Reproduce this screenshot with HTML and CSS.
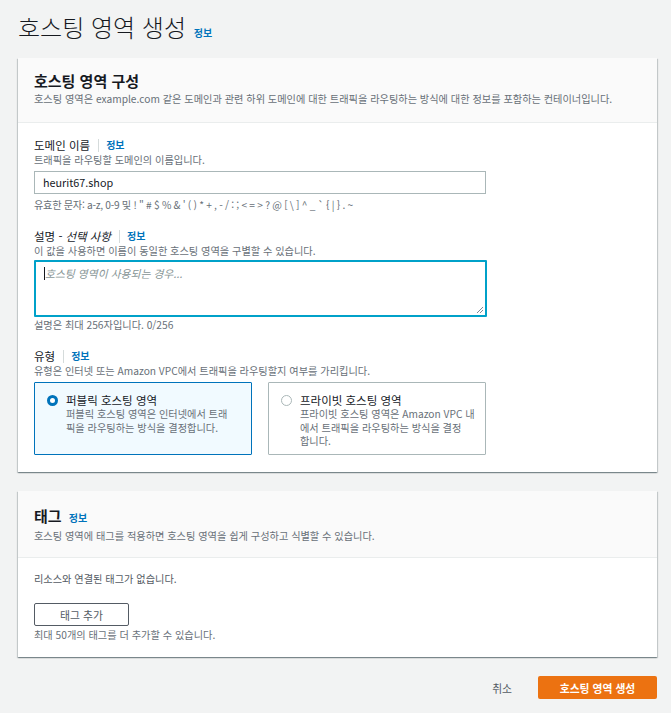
FILE: index.html
```html
<!DOCTYPE html>
<html lang="ko">
<head>
<meta charset="utf-8">
<title>호스팅 영역 생성</title>
<link rel="stylesheet" href="styles.css">
</head>
<body>
<div class="page">
  <h1 class="page-title">호스팅 영역 생성 <a class="info">정보</a></h1>

  <section class="panel">
    <header class="panel-head">
      <h2 class="panel-title">호스팅 영역 구성</h2>
      <p class="panel-desc">호스팅 영역은 example.com 같은 도메인과 관련 하위 도메인에 대한 트래픽을 라우팅하는 방식에 대한 정보를 포함하는 컨테이너입니다.</p>
    </header>
    <div class="panel-body">
      <div class="field">
        <div class="label">도메인 이름<span class="sep"></span><a class="info">정보</a></div>
        <div class="desc">트래픽을 라우팅할 도메인의 이름입니다.</div>
        <div class="input">heurit67.shop</div>
        <div class="hint chars">유효한 문자: a-z, 0-9 및 ! " # $ % &amp; ' ( ) * + , - / : ; &lt; = &gt; ? @ [ \ ] ^ _ ` { | } . ~</div>
      </div>

      <div class="field">
        <div class="label">설명 - <i>선택 사항</i><span class="sep"></span><a class="info">정보</a></div>
        <div class="desc">이 값을 사용하면 이름이 동일한 호스팅 영역을 구별할 수 있습니다.</div>
        <div class="textarea"><span class="caret"></span><span class="placeholder">호스팅 영역이 사용되는 경우...</span>
          <svg class="grip" width="8" height="8" viewBox="0 0 8 8"><path d="M7 1L1 7M7 4L4 7" stroke="#7d8998" stroke-width="1"/></svg>
        </div>
        <div class="hint tight">설명은 최대 256자입니다. 0/256</div>
      </div>

      <div class="field">
        <div class="label">유형<span class="sep"></span><a class="info">정보</a></div>
        <div class="desc">유형은 인터넷 또는 Amazon VPC에서 트래픽을 라우팅할지 여부를 가리킵니다.</div>
        <div class="cards">
          <div class="card selected">
            <span class="radio on"></span>
            <div class="card-text">
              <div class="card-title">퍼블릭 호스팅 영역</div>
              <div class="card-desc">퍼블릭 호스팅 영역은 인터넷에서 트래<br>픽을 라우팅하는 방식을 결정합니다.</div>
            </div>
          </div>
          <div class="card">
            <span class="radio"></span>
            <div class="card-text">
              <div class="card-title">프라이빗 호스팅 영역</div>
              <div class="card-desc">프라이빗 호스팅 영역은 Amazon VPC 내<br>에서 트래픽을 라우팅하는 방식을 결정<br>합니다.</div>
            </div>
          </div>
        </div>
      </div>
    </div>
  </section>

  <section class="panel">
    <header class="panel-head tags-head">
      <h2 class="panel-title">태그 <a class="info">정보</a></h2>
      <p class="panel-desc">호스팅 영역에 태그를 적용하면 호스팅 영역을 쉽게 구성하고 식별할 수 있습니다.</p>
    </header>
    <div class="panel-body tags-body">
      <div class="empty">리소스와 연결된 태그가 없습니다.</div>
      <button class="btn">태그 추가</button>
      <div class="hint">최대 50개의 태그를 더 추가할 수 있습니다.</div>
    </div>
  </section>

  <div class="footer">
    <button class="btn-link">취소</button>
    <button class="btn-primary">호스팅 영역 생성</button>
  </div>
</div>
</body>
</html>
```

FILE: styles.css
```css
html, body {
  margin: 0;
  padding: 0;
  background: #f2f3f3;
}
body {
  font-family: "Noto Sans CJK KR", "Noto Sans", sans-serif;
  color: #16191f;
  font-size: 11px;
}
.page {
  padding: 0 14px 0 18px;
}
.page-title {
  margin: 0;
  padding-top: 11px;
  height: 48px;
  box-sizing: border-box;
  font-size: 24px;
  line-height: 32px;
  font-weight: 300;
  color: #16191f;
}
.info {
  color: #0073bb;
  font-weight: 700;
  font-size: 10px;
  text-decoration: none;
}
.page-title .info {
  font-size: 10px;
  margin-left: 1px;
}
.panel {
  background: #fff;
  box-shadow: 0 1px 1px 0 rgba(0, 28, 36, 0.3), 1px 1px 1px 0 rgba(0, 28, 36, 0.15), -1px 1px 1px 0 rgba(0, 28, 36, 0.15);
  margin-bottom: 19px;
}
.page-title + .panel {
  margin-top: 10px;
}
.panel-head {
  background: #fafafa;
  border-bottom: 1px solid #eaeded;
  padding: 13px 16px 0;
  height: 65px;
  box-sizing: border-box;
}
.panel-title {
  margin: 0;
  font-size: 15px;
  line-height: 20px;
  font-weight: 700;
}
.panel-title .info {
  font-weight: 700;
  font-size: 10px;
  margin-left: 3px;
}
.panel-desc {
  margin: 1px 0 0;
  font-size: 10.2px;
  line-height: 14px;
  color: #687078;
}
.panel-body {
  padding: 14px 16px 17px;
}
.field + .field {
  margin-top: 16px;
}
.label {
  font-size: 11.5px;
  line-height: 16px;
  display: flex;
  align-items: center;
}
.label i {
  font-style: italic;
  margin-left: 3px;
}
.sep {
  display: inline-block;
  width: 1px;
  height: 13px;
  background: #d5dbdb;
  margin: 0 7px 0 8px;
}
.desc, .hint {
  font-size: 10.2px;
  line-height: 14px;
  color: #687078;
}
.input {
  margin-top: 4px;
  width: 452px;
  height: 23px;
  box-sizing: border-box;
  border: 1px solid #aab7b8;
  background: #fff;
  padding: 0 8px;
  font-size: 10.8px;
  line-height: 21px;
  color: #16191f;
}
.hint {
  margin-top: 4px;
}
.hint.chars {
  letter-spacing: -0.3px;
}
.hint.tight {
  margin-top: 1px;
}
.textarea {
  margin-top: 2px;
  width: 453px;
  height: 57px;
  box-sizing: border-box;
  border: 2px solid #00a1c9;
  border-radius: 1px;
  background: #fff;
  padding: 3px 8px;
  position: relative;
  display: flex;
  align-items: flex-start;
  font-size: 10.8px;
  line-height: 16px;
}
.caret {
  display: inline-block;
  width: 1px;
  height: 13px;
  margin-top: 2px;
  background: #16191f;
}
.placeholder {
  color: #879596;
  font-style: italic;
}
.grip {
  position: absolute;
  right: 1px;
  bottom: 1px;
}
.cards {
  margin-top: 4px;
  display: grid;
  grid-template-columns: 218px 218px;
  column-gap: 16px;
}
.card {
  height: 73px;
  box-sizing: border-box;
  border: 1px solid #aab7b8;
  border-radius: 1px;
  background: #fff;
  padding: 10px 4px 0 12px;
  display: flex;
  gap: 8px;
}
.card.selected {
  border-color: #0073bb;
  background: #f1faff;
}
.radio {
  flex: none;
  width: 11px;
  height: 11px;
  box-sizing: border-box;
  border-radius: 50%;
  border: 1px solid #aab7b8;
  background: #fff;
  margin-top: 2px;
}
.radio.on {
  border: 3.5px solid #0073bb;
}
.card-text {
  flex: 1;
  min-width: 0;
}
.card-title {
  font-size: 11.5px;
  line-height: 14px;
  color: #16191f;
}
.card-desc {
  font-size: 10.2px;
  line-height: 13.5px;
  color: #687078;
  white-space: nowrap;
}
.tags-head {
  height: 67px;
  padding-top: 15px;
}
.tags-body {
  padding: 14px 16px 15px;
}
.empty {
  font-size: 10.2px;
  line-height: 14px;
  color: #545b64;
}
.btn {
  display: block;
  margin-top: 17px;
  width: 95px;
  height: 23px;
  border: 1px solid #545b64;
  border-radius: 2px;
  background: #fff;
  font-family: inherit;
  font-size: 10.8px;
  color: #545b64;
  padding: 0;
}
.tags-body .hint {
  margin-top: 2px;
}
.footer {
  display: flex;
  justify-content: flex-end;
  align-items: center;
  gap: 14px;
}
.btn-link {
  border: none;
  background: none;
  font-family: inherit;
  font-size: 10.8px;
  color: #545b64;
  padding: 0 12px;
  height: 23px;
}
.btn-primary {
  width: 119px;
  height: 23px;
  border: none;
  border-radius: 2px;
  background: #ec7211;
  color: #fff;
  font-family: inherit;
  font-weight: 700;
  font-size: 10.8px;
  padding: 0;
}
```
